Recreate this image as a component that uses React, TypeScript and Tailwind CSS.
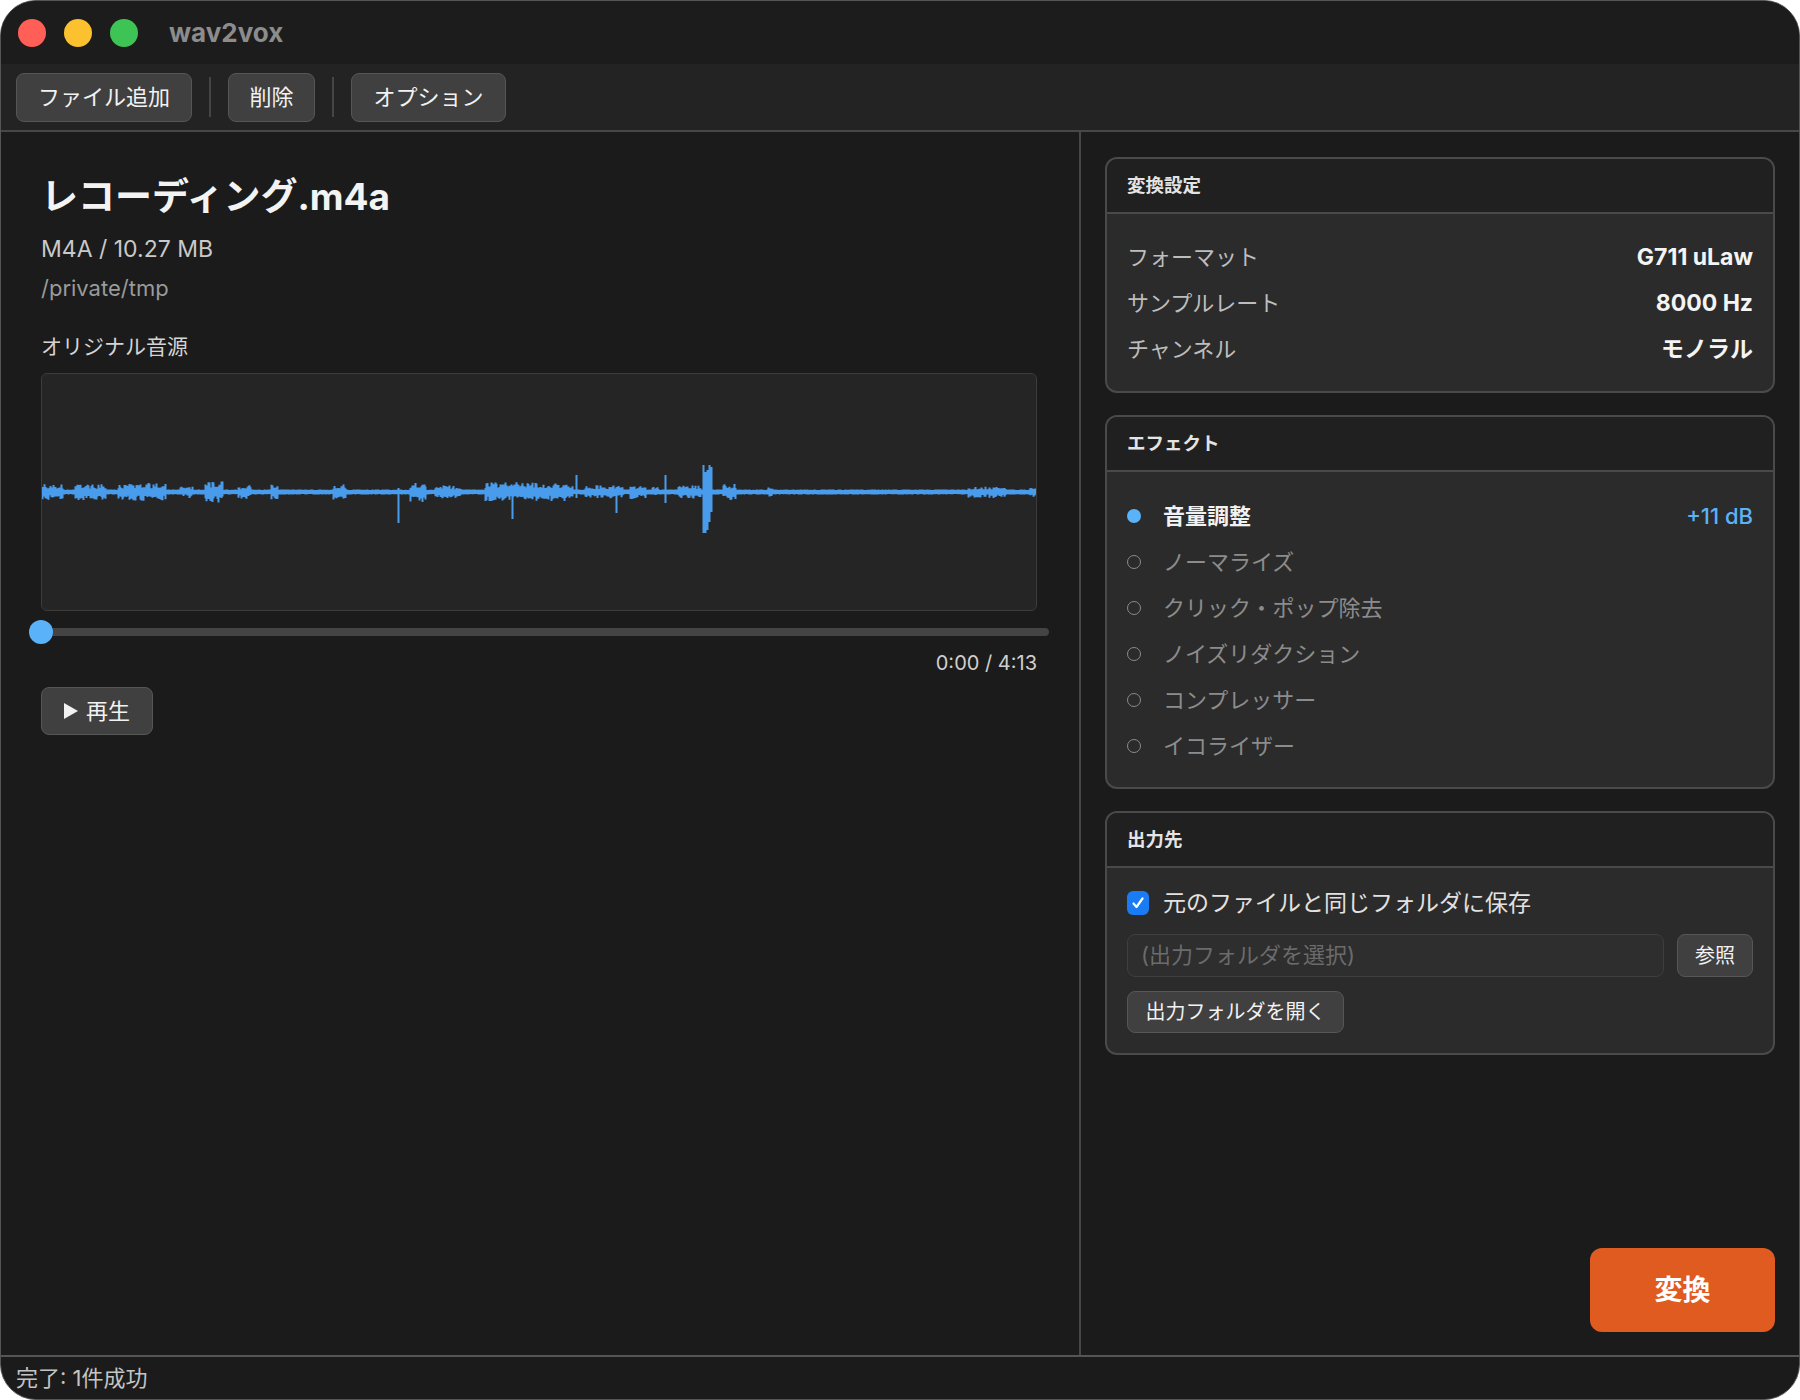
import React from "react";

const BURSTS: [number, number, number][] = [
  [42, 62, 8], [75, 105, 8], [118, 165, 9], [180, 192, 6], [205, 222, 11],
  [238, 250, 7], [271, 277, 8], [333, 345, 8], [410, 425, 10], [435, 460, 7],
  [485, 540, 10], [540, 572, 9], [585, 622, 7], [630, 645, 7], [652, 658, 5],
  [678, 700, 7], [723, 735, 8], [768, 772, 5], [968, 1005, 6], [1030, 1036, 6],
];

// Isolated clicks: [x, up, down]
const SPIKES: [number, number, number][] = [
  [398, 4, 31], [512, 6, 27], [576, 17, 6], [616, 5, 21], [665, 17, 11],
  [703, 27, 41], [705, 20, 41], [707, 22, 38], [709, 27, 30], [711, 25, 20],
];

const WAVE_W = 996;
const WAVE_H = 238;
const ORIGIN = 41;

function rng(seed: number) {
  let s = seed;
  return () => {
    s = (s * 1664525 + 1013904223) >>> 0;
    return s / 4294967296;
  };
}

function wavePath() {
  const rand = rng(7);
  const mid = WAVE_H / 2;
  let d = "";
  for (let x = 1; x < WAVE_W - 1; x++) {
    const abs = x + ORIGIN;
    let up = 1.8 + rand() * 0.8;
    let down = 1.8 + rand() * 0.8;
    const b = BURSTS.find(([a, z]) => abs >= a && abs <= z);
    if (b) {
      const r1 = rand();
      const r2 = rand();
      up = Math.max(up, b[2] * (0.4 + 0.6 * r1 * r1));
      down = Math.max(down, b[2] * (0.4 + 0.6 * r2 * r2));
    }
    const s = SPIKES.find(([sx]) => Math.abs(sx - abs) < 1);
    if (s) {
      up = Math.max(up, s[1]);
      down = Math.max(down, s[2]);
    }
    d += `M${x + 0.5} ${(mid - up).toFixed(1)}V${(mid + down).toFixed(1)}`;
  }
  return d;
}

const WAVE = wavePath();

function Btn({ children, className = "" }: { children: React.ReactNode; className?: string }) {
  return (
    <div
      className={`flex items-center justify-center rounded-[8px] border-[1.5px] border-[#565656] bg-[#404040] text-[#f2f2f2] ${className}`}
    >
      {children}
    </div>
  );
}

function Card({ title, children, body }: { title: string; children: React.ReactNode; body: string }) {
  return (
    <div className="overflow-hidden rounded-[12px] border-2 border-[#4a4a4a] bg-[#2b2b2b]">
      <div className="flex h-[55px] items-center border-b-2 border-[#4a4a4a] bg-[#202020] px-[20px] text-[18.5px] font-bold text-[#e4e4e4]">
        {title}
      </div>
      <div className={`px-[20px] ${body}`}>{children}</div>
    </div>
  );
}

const SETTINGS = [
  ["フォーマット", "G711 uLaw"],
  ["サンプルレート", "8000 Hz"],
  ["チャンネル", "モノラル"],
];

const EFFECTS = ["ノーマライズ", "クリック・ポップ除去", "ノイズリダクション", "コンプレッサー", "イコライザー"];

export default function App() {
  return (
    <div className="h-[1400px] w-[1800px] bg-white">
      <div className="flex h-full flex-col overflow-hidden rounded-[36px] border border-[#555] bg-[#1b1b1b] font-['Inter','Noto_Sans_CJK_JP',sans-serif] text-[#e8e8e8]">
        {/* title bar */}
        <div className="flex h-[63px] shrink-0 items-center bg-[#1c1c1c] pl-[17px]">
          <span className="h-[28px] w-[28px] rounded-full bg-[#ff5f57]" />
          <span className="ml-[18px] h-[28px] w-[28px] rounded-full bg-[#fcc12f]" />
          <span className="ml-[18px] h-[28px] w-[28px] rounded-full bg-[#3ec455]" />
          <span className="ml-[31px] text-[26px] font-bold text-[#8c8c8c]">wav2vox</span>
        </div>

        {/* toolbar */}
        <div className="flex h-[68px] shrink-0 items-center gap-[17px] border-b-2 border-[#474747] bg-[#232323] pl-[15px]">
          <Btn className="h-[49px] w-[176px] text-[22px]">ファイル追加</Btn>
          <div className="h-[40px] w-[2px] bg-[#454545]" />
          <Btn className="h-[49px] w-[87px] text-[22px]">削除</Btn>
          <div className="h-[40px] w-[2px] bg-[#454545]" />
          <Btn className="h-[49px] w-[155px] text-[22px]">オプション</Btn>
        </div>

        <div className="flex min-h-0 flex-1">
          {/* left: file preview */}
          <div className="w-[1080px] shrink-0 border-r-2 border-[#474747] pl-[40px] pt-[43px]">
            <div className="text-[37px] font-bold leading-[44px] text-[#f3f3f3]">レコーディング.m4a</div>
            <div className="mt-[15px] text-[23px] leading-[30px] text-[#c9c9c9]">M4A / 10.27 MB</div>
            <div className="mt-[10px] text-[22px] leading-[28px] text-[#9a9a9a]">/private/tmp</div>
            <div className="mt-[31px] text-[21px] leading-[28px] text-[#d4d4d4]">オリジナル音源</div>
            <div className="mt-[12px] h-[238px] w-[996px] overflow-hidden rounded-[6px] border border-[#3c3c3c] bg-[#252525]">
              <svg width={WAVE_W} height={WAVE_H} viewBox={`0 0 ${WAVE_W} ${WAVE_H}`} className="-ml-px -mt-px">
                <defs>
                  <filter id="soft" x="-2%" y="-20%" width="104%" height="140%">
                    <feGaussianBlur stdDeviation="0.7" />
                  </filter>
                </defs>
                <g filter="url(#soft)">
                  <line x1={1} x2={WAVE_W - 1} y1={WAVE_H / 2} y2={WAVE_H / 2} stroke="#4a9cec" strokeWidth={3.5} />
                  <path d={WAVE} stroke="#4a9cec" strokeWidth={2} fill="none" />
                </g>
              </svg>
            </div>
            <div className="relative mt-[9px] h-[24px] w-[1008px]">
              <div className="absolute inset-x-0 top-[8px] h-[8px] rounded-full bg-[#444]" />
              <div className="absolute left-[-12px] top-0 h-[24px] w-[24px] rounded-full bg-[#5ab2f8]" />
            </div>
            <div className="mt-[6px] w-[996px] text-right text-[20px] leading-[26px] text-[#cfcfcf]">0:00 / 4:13</div>
            <Btn className="mt-[11px] h-[48px] w-[112px] gap-[8px] text-[22px]">
              <svg width="14" height="16" viewBox="0 0 14 16">
                <polygon points="0,0 14,8 0,16" fill="#f2f2f2" />
              </svg>
              <span>再生</span>
            </Btn>
          </div>

          {/* right: settings */}
          <div className="flex min-w-0 flex-1 flex-col gap-[22px] px-[24px] pb-[23px] pt-[25px]">
            <Card title="変換設定" body="pb-[19px] pt-[20px]">
              {SETTINGS.map(([k, v]) => (
                <div key={k} className="flex h-[46px] items-center justify-between text-[22px]">
                  <span className="text-[#bdbdbd]">{k}</span>
                  <span className="text-[23px] font-bold text-[#f4f4f4]">{v}</span>
                </div>
              ))}
            </Card>

            <Card title="エフェクト" body="pb-[18px] pt-[21px]">
              <div className="flex h-[46px] items-center gap-[22px] text-[22px]">
                <span className="h-[14px] w-[14px] rounded-full bg-[#5ab2f8]" />
                <span className="font-bold text-[#f2f2f2]">音量調整</span>
                <span className="ml-auto font-medium text-[#5ab2f8]">+11 dB</span>
              </div>
              {EFFECTS.map((e) => (
                <div key={e} className="flex h-[46px] items-center gap-[22px] text-[22px]">
                  <span className="h-[14px] w-[14px] rounded-full border-[1.5px] border-[#8a8a8a]" />
                  <span className="text-[#8c8c8c]">{e}</span>
                </div>
              ))}
            </Card>

            <Card title="出力先" body="pb-[20px] pt-[20px]">
              <div className="flex h-[30px] items-center gap-[14px]">
                <span className="flex h-[24px] w-[22px] items-center justify-center rounded-[6px] bg-[#1a7cf4]">
                  <svg width="14" height="14" viewBox="0 0 14 14">
                    <path d="M2.5 7.5 L5.5 11 L11.5 2.5" stroke="#fff" strokeWidth="2.2" fill="none" strokeLinecap="round" strokeLinejoin="round" />
                  </svg>
                </span>
                <span className="text-[23px] text-[#e2e2e2]">元のファイルと同じフォルダに保存</span>
              </div>
              <div className="mt-[16px] flex gap-[13px]">
                <div className="flex h-[43px] flex-1 items-center rounded-[8px] border border-[#3f3f3f] bg-[#2e2e2e] px-[13px] text-[22px] text-[#6b6b6b]">
                  (出力フォルダを選択)
                </div>
                <Btn className="h-[43px] w-[76px] text-[20px]">参照</Btn>
              </div>
              <Btn className="mt-[14px] h-[42px] w-[217px] text-[20px]">出力フォルダを開く</Btn>
            </Card>

            <div className="mt-auto flex h-[84px] w-[185px] items-center justify-center self-end rounded-[12px] bg-[#e05b20] text-[28px] font-bold text-white">
              変換
            </div>
          </div>
        </div>

        {/* status bar */}
        <div className="flex h-[44px] shrink-0 items-center border-t-2 border-[#555] pl-[15px] text-[22px] text-[#c4c4c4]">
          完了: 1件成功
        </div>
      </div>
    </div>
  );
}
